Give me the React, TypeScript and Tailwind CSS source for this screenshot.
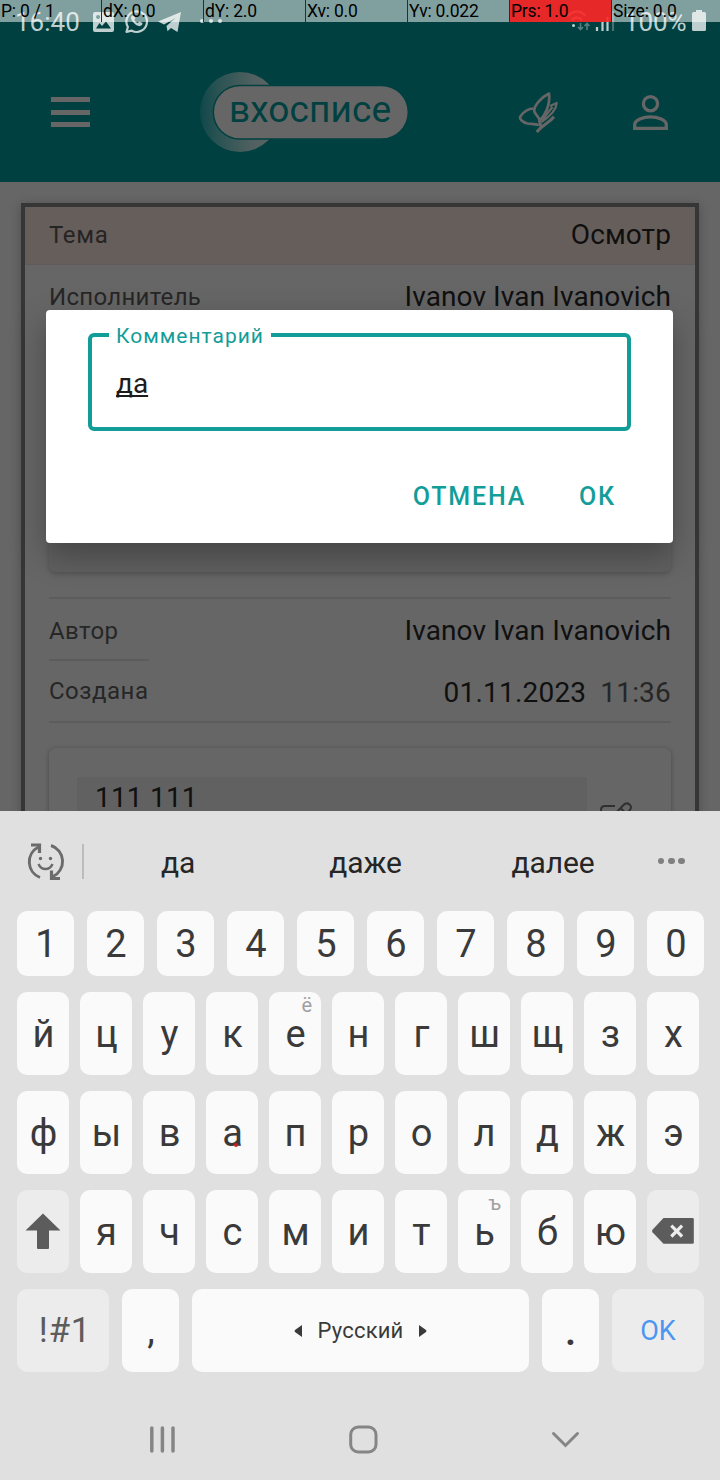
import React from "react";

const metrics = ["P: 0 / 1", "dX: 0.0", "dY: 2.0", "Xv: 0.0", "Yv: 0.022", "Prs: 1.0", "Size: 0.0"];
const metricWidths = ["w-[102px]", "w-[102px]", "w-[102px]", "w-[102px]", "w-[102px]", "w-[102px]", "w-[108px]"];

function PointerBar() {
  return (
    <div className="absolute inset-x-0 top-0 z-10 flex h-[22px] text-[17.500px] leading-[22px] text-black">
      {metrics.map((m, i) => (
        <div
          key={m}
          className={`${metricWidths[i]} shrink-0 whitespace-nowrap pl-px tracking-[-0.200px] ${
            i === 5 ? "bg-[#ff2626]/90" : "bg-white/50"
          } ${i < 6 ? "border-r border-[#004040]" : ""}`}
        >
          {m}
        </div>
      ))}
    </div>
  );
}

function StatusBar() {
  return (
    <div className="flex h-11 items-center justify-between pl-[15px] pr-[13px] text-[26px] leading-[44px] text-[#bfcfcf]">
      <div className="flex items-center">
        <span className="w-[78px]">16:40</span>
        <svg width="132" height="44" viewBox="93 0 132 44" fill="currentColor">
          <path
            fillRule="evenodd"
            d="M95 12h17a2 2 0 0 1 2 2v16a2 2 0 0 1-2 2H95a2 2 0 0 1-2-2V14a2 2 0 0 1 2-2zM96 28.500h15l-5-7-4 4.500-2.500-3zM98 15a2 2 0 1 0 .1 0z"
          />
          <path
            d="M126.500 31.800l1.400-4.800a10.300 10.300 0 1 1 3.900 3.700z"
            fill="none"
            stroke="currentColor"
            strokeWidth="2.200"
            strokeLinejoin="round"
          />
          <path d="M132.500 15.500c-2 1-1.800 3.600.3 6.300 2.200 2.900 5 4.600 7.200 4.300 1.700-.3 2.700-1.700 2.400-3l-3-1.700-1.500 1.600c-1.700-.6-3-2-3.600-3.300l1.100-1.500-1.200-2.800z" />
          <path d="M158 21.500L181 12l-3.500 20-6.500-4-3.500 3.300-1-5.300 9-8-11.500 6.500z" />
          <circle cx="202" cy="21" r="2" />
          <circle cx="211" cy="21" r="2" />
          <circle cx="220" cy="21" r="2" />
        </svg>
      </div>
      <div className="flex items-center">
        <svg width="57" height="44" viewBox="567 0 57 44" fill="none" stroke="currentColor">
          <path d="M568 15.500q5-4 9-4t8.500 4M571.500 20q3-2.500 5.500-2.500t5 2.500" strokeWidth="2.500" opacity=".8" />
          <circle cx="573.500" cy="25.500" r="1.500" fill="currentColor" stroke="none" />
          <path d="M580.500 23v6.500m-2.500-2.500l2.500 2.500 2.500-2.500M587 30v-6.500m-2.500 2.500l2.500-2.500 2.500 2.500" strokeWidth="1.600" opacity=".45" />
          <path d="M597 27v4M602.500 22v9M607.500 17v14" strokeWidth="2.200" />
          <path d="M613 11v20" strokeWidth="2.200" opacity=".35" />
        </svg>
        <span className="w-[68px] tracking-[-0.100px]">100%</span>
        <svg width="15" height="44" viewBox="692 0 15 44" fill="currentColor">
          <path d="M696 10h6v2h2.500a1.500 1.500 0 0 1 1.500 1.500v16a1.500 1.500 0 0 1-1.500 1.500h-11a1.500 1.500 0 0 1-1.500-1.500v-16a1.500 1.500 0 0 1 1.500-1.500h2.500z" />
        </svg>
      </div>
    </div>
  );
}

function AppHeader() {
  return (
    <div className="flex h-[138px] items-start pl-[51px] pt-[28px] text-[#666]">
      <div className="mt-[25px] flex w-[39px] flex-col gap-[7.500px]">
        <div className="h-[5px] bg-[#666]" />
        <div className="h-[5px] bg-[#666]" />
        <div className="h-[5px] bg-[#666]" />
      </div>
      <div className="relative ml-[110px] h-20 w-[209px]">
        <svg width="209" height="80" viewBox="200 72 209 80">
          <defs>
            <linearGradient id="moon" x1="0" x2="1">
              <stop offset="0" stopColor="#10474a" />
              <stop offset=".2" stopColor="#285252" />
              <stop offset=".65" stopColor="#506060" />
              <stop offset="1" stopColor="#606464" />
            </linearGradient>
          </defs>
          <circle cx="240" cy="112" r="40" fill="url(#moon)" />
          <rect x="213.300" y="85.500" width="195" height="53.500" rx="26.700" fill="#666" stroke="#004040" strokeWidth="1.500" />
        </svg>
        <div className="absolute left-[29px] top-[14px] whitespace-nowrap text-[37px] leading-[48px] tracking-[0.100px] text-[#004040]">
          вхосписе
        </div>
      </div>
      <svg className="ml-[109px] mt-[17px]" width="42" height="46" viewBox="518 89 42 46" fill="none" stroke="currentColor" strokeWidth="2.700" strokeLinejoin="round">
        <path d="M533.500 108.500C529 108.500 524 111.500 520.700 116C518.500 119 523 122.500 527.500 123.500C531 124 535 123.500 539 125" />
        <path d="M549 93.500C542 97 534.500 104.500 534.200 110.500C534 114 539.500 116 539.500 121C545 115.500 550.500 105 549 93.500z" />
        <path d="M550 106L556.700 103C556.500 108.500 551 115.500 541.500 122M552.500 107L542 120" strokeWidth="2.200" />
        <path d="M554 116.700C549 123 543 124.500 536.700 132M539.500 120.500L541 127" strokeWidth="3" />
      </svg>
      <svg className="ml-[73px] mt-[22px]" width="36" height="37" viewBox="633 94 36 37" fill="none" stroke="currentColor" strokeWidth="3.300">
        <circle cx="650.500" cy="103.700" r="7.100" />
        <path d="M634.700 128.400v-3.900c0-4.500 8.500-7.700 15.800-7.700s15.800 3.200 15.800 7.700v3.900z" />
      </svg>
    </div>
  );
}

function TaskCard() {
  return (
    <div className="px-[21px] pt-[21px]">
      <div className="h-[620px] border-4 border-[#363636] shadow-[0_2px_10px_rgba(0,0,0,0.25)]">
        <div className="flex h-[58px] justify-between border-b border-[#605b59] bg-[#665e5b] px-6 leading-[56px]">
          <span className="text-2xl leading-[56px] tracking-[0.700px] text-[#262423]">Тема</span>
          <span className="text-[28px] leading-[55px] tracking-[0.100px] text-[#100f0f]">Осмотр</span>
        </div>
        <div className="px-6">
          <div className="flex h-[62px] justify-between">
            <span className="text-2xl leading-[64px] tracking-[0.300px] text-[#262626]">Исполнитель</span>
            <span className="text-[28px] leading-[64px] tracking-[0.100px] text-[#101010]">Ivanov Ivan Ivanovich</span>
          </div>
          <div className="h-[245px] rounded-[7px] bg-[#606060] shadow-[0_2px_5px_rgba(0,0,0,0.2)]" />
          <div className="mt-[25px] h-[2px] bg-[#5c5c5c]" />
          <div className="flex h-[60px] justify-between">
            <span className="text-2xl leading-[64px] tracking-[0.400px] text-[#262626]">Автор</span>
            <span className="text-[28px] leading-[64px] tracking-[0.100px] text-[#101010]">Ivanov Ivan Ivanovich</span>
          </div>
          <div className="h-[2px] w-[100px] bg-[#5c5c5c]" />
          <div className="flex h-[62px] justify-between border-b-2 border-[#5c5c5c]">
            <span className="text-2xl leading-[61px] tracking-[0.500px] text-[#262626]">Создана</span>
            <span className="flex gap-[14px] text-[28px] leading-[64px] tracking-[0.200px] text-[#101010]">
              <span>01.11.2023</span>
              <span className="text-[#262626]">11:36</span>
            </span>
          </div>
          <div className="mt-[25px] flex h-[120px] rounded-[7px] bg-[#666] pl-7 pt-[29px] shadow-[0_1px_5px_rgba(0,0,0,0.3)]">
            <div className="h-[80px] w-[510px] bg-[#616161] pl-[18px] text-[28px] leading-[42px] tracking-[0.200px] text-[#101010]">
              111 111
            </div>
            <svg className="ml-[12px] mt-[23px]" width="36" height="30" viewBox="599 800 36 30" fill="none" stroke="#303030" strokeWidth="2">
              <path d="M615 806h-10q-4 0-4 4v12" />
              <path d="M615 814l8.500-9q3-3 6-.5t0 6l-9 9M620.500 808l6 6" />
            </svg>
          </div>
        </div>
      </div>
    </div>
  );
}

function Dialog() {
  return (
    <div className="absolute left-[46px] top-[310px] flex h-[233px] w-[627px] flex-col rounded-[4px] bg-white px-[42px] pt-[23px] shadow-[0_12px_32px_rgba(0,0,0,0.3)]">
      <div className="relative h-[98px] rounded-[6px] border-4 border-[#129d99] pl-6 text-[28px] leading-[93px] text-[#1c1c1c]">
        <span className="absolute -top-[17px] left-[17px] w-[162px] whitespace-nowrap bg-white pl-[7px] text-[21px] leading-[33px] tracking-[1px] text-[#129d99]">
          Комментарий
        </span>
        <span className="underline decoration-[1.500px] underline-offset-[2px] [text-decoration-skip-ink:none]">да</span>
      </div>
      <div className="flex justify-end gap-[53px] pr-[15px] pt-[41px] text-[25px] font-medium leading-[50px] tracking-[1.800px] text-[#129d99]">
        <span>ОТМЕНА</span>
        <span>ОК</span>
      </div>
    </div>
  );
}

const hints: Record<string, string> = { е: "ё", ь: "ъ" };

function Key({ label }: { label: string }) {
  return (
    <div className="relative h-[83px] w-[52px] rounded-[10px] bg-[#fafafa] pl-px text-center text-[38px] leading-[85px] text-[#3a3a3a]">
      {label}
      {hints[label] && (
        <span className="absolute -top-px right-[9px] text-[20px] leading-[28px] text-[#a0a0a0]">{hints[label]}</span>
      )}
    </div>
  );
}

function Keyboard() {
  return (
    <div className="relative h-[669px] bg-[#e0e0e0]">
      <div className="flex h-[100px] items-center pl-[25px] text-[30px] leading-[100px] tracking-[-0.100px] text-[#262626]">
        <svg width="42" height="42" viewBox="25 840 42 42" fill="none" stroke="#6b6b6b" strokeWidth="2.900">
          <path d="M40 877.500A16.700 16.700 0 0 1 38.500 847M51 845.500A16.700 16.700 0 0 1 53 876.500" />
          <path d="M31 845h8.500v8" strokeWidth="3.200" />
          <path d="M60 878.500h-8.500v-8" strokeWidth="3.200" />
          <path d="M38.500 864q2 5 7 5t7-5" strokeWidth="2.400" />
          <circle cx="40.500" cy="858.500" r="1.700" fill="#6b6b6b" stroke="none" />
          <circle cx="50.500" cy="858.500" r="1.700" fill="#6b6b6b" stroke="none" />
        </svg>
        <div className="ml-[15px] h-[35px] w-[2px] bg-[#bcbcbc]" />
        <span className="mt-[3px] w-[188px] text-center">да</span>
        <span className="mt-[3px] w-[187px] text-center">даже</span>
        <span className="mt-[3px] w-[188px] text-center">далее</span>
        <div className="ml-[10.500px] flex gap-[3.500px]">
          <div className="size-[6.800px] rounded-full bg-[#808080]" />
          <div className="size-[6.800px] rounded-full bg-[#808080]" />
          <div className="size-[6.800px] rounded-full bg-[#808080]" />
        </div>
      </div>
      <div className="flex gap-[13px] pl-[17px]">
        {[..."1234567890"].map((n) => (
          <div key={n} className="h-[65px] w-[57px] rounded-[10px] bg-[#fafafa] pl-px text-center text-[38px] leading-[66px] text-[#3a3a3a]">
            {n}
          </div>
        ))}
      </div>
      <div className="mt-4 flex gap-[11px] pl-[17px]">
        {[..."йцукенгшщзх"].map((c) => <Key key={c} label={c} />)}
      </div>
      <div className="mt-4 flex gap-[11px] pl-[17px]">
        {[..."фывапролджэ"].map((c) => <Key key={c} label={c} />)}
      </div>
      <div className="mt-4 flex gap-[11px] pl-[17px]">
        <div className="h-[83px] w-[52px] rounded-[10px] bg-[#ececec]">
          <svg width="52" height="83" viewBox="17 1190 52 83" fill="#5c5c5c">
            <path d="M43 1213.500l17.500 17H49V1248a1 1 0 0 1-1 1H38a1 1 0 0 1-1-1V1230.500H25.500z" />
          </svg>
        </div>
        {[..."ячсмитьбю"].map((c) => <Key key={c} label={c} />)}
        <div className="h-[83px] w-[52px] rounded-[10px] bg-[#ececec]">
          <svg width="52" height="83" viewBox="647 1190 52 83">
            <path d="M663.500 1218H692.500q1.300 0 1.300 1.300V1242.500q0 1.300-1.300 1.300H663.500L652.500 1232.200q-1-1.200 0-2.400z" fill="#5c5c5c" />
            <path d="M671.300 1225.700l10.800 10.800M682.100 1225.700l-10.800 10.800" stroke="#ececec" strokeWidth="3.200" />
          </svg>
        </div>
      </div>
      <div className="mt-4 flex gap-[13px] pl-[17px] text-center text-[#3a3a3a]">
        <div className="h-[83px] w-[92px] rounded-[10px] bg-[#ececec] pl-[4px] text-[35px] leading-[84px] tracking-[0.800px] text-[#5c5c5c]">!#1</div>
        <div className="h-[83px] w-[57px] rounded-[10px] bg-[#fafafa] pl-px text-[38px] leading-[83px]">,</div>
        <div className="flex h-[83px] w-[337px] items-center justify-center gap-[15px] rounded-[10px] bg-[#fafafa] text-[22px] leading-[83px]">
          <svg width="8" height="12" viewBox="0 0 8 12" fill="#3a3a3a"><path d="M8 0v12L1 7q-1-1 0-2z" /></svg>
          <span className="tracking-[0.200px]">Русский</span>
          <svg width="8" height="12" viewBox="0 0 8 12" fill="#3a3a3a"><path d="M0 0v12l7-5q1-1 0-2z" /></svg>
        </div>
        <div className="flex h-[83px] w-[57px] items-end justify-center rounded-[10px] bg-[#fafafa]">
          <span className="text-[42px] font-medium leading-[83px]">.</span>
        </div>
        <div className="h-[83px] w-[92px] rounded-[10px] bg-[#ececec] text-[27px] leading-[85px] text-[#4a96f0]">OK</div>
      </div>
      <svg className="mt-[48px]" width="720" height="40" viewBox="0 1420 720 40" fill="none" stroke="#858585" strokeWidth="3.500" strokeLinecap="round">
        <path d="M151.800 1428v23M162.400 1428v23M173 1428v23" />
        <rect x="350.700" y="1427" width="25.300" height="25" rx="7.500" strokeWidth="3" />
        <path d="M553.500 1433.500l12 12 12-12" strokeWidth="3" />
      </svg>
      <div className="absolute left-[234px] top-[332px] size-[4px] rounded-full bg-[#c81e1e]" />
    </div>
  );
}

export default function App() {
  return (
    <div className="relative h-[1480px] w-[720px] overflow-hidden bg-[#666] font-['Roboto',sans-serif]">
      <div className="relative h-[811px] overflow-hidden">
        <div className="h-[182px] bg-[#004040]">
          <StatusBar />
          <AppHeader />
        </div>
        <TaskCard />
        <PointerBar />
        <Dialog />
      </div>
      <Keyboard />
    </div>
  );
}
